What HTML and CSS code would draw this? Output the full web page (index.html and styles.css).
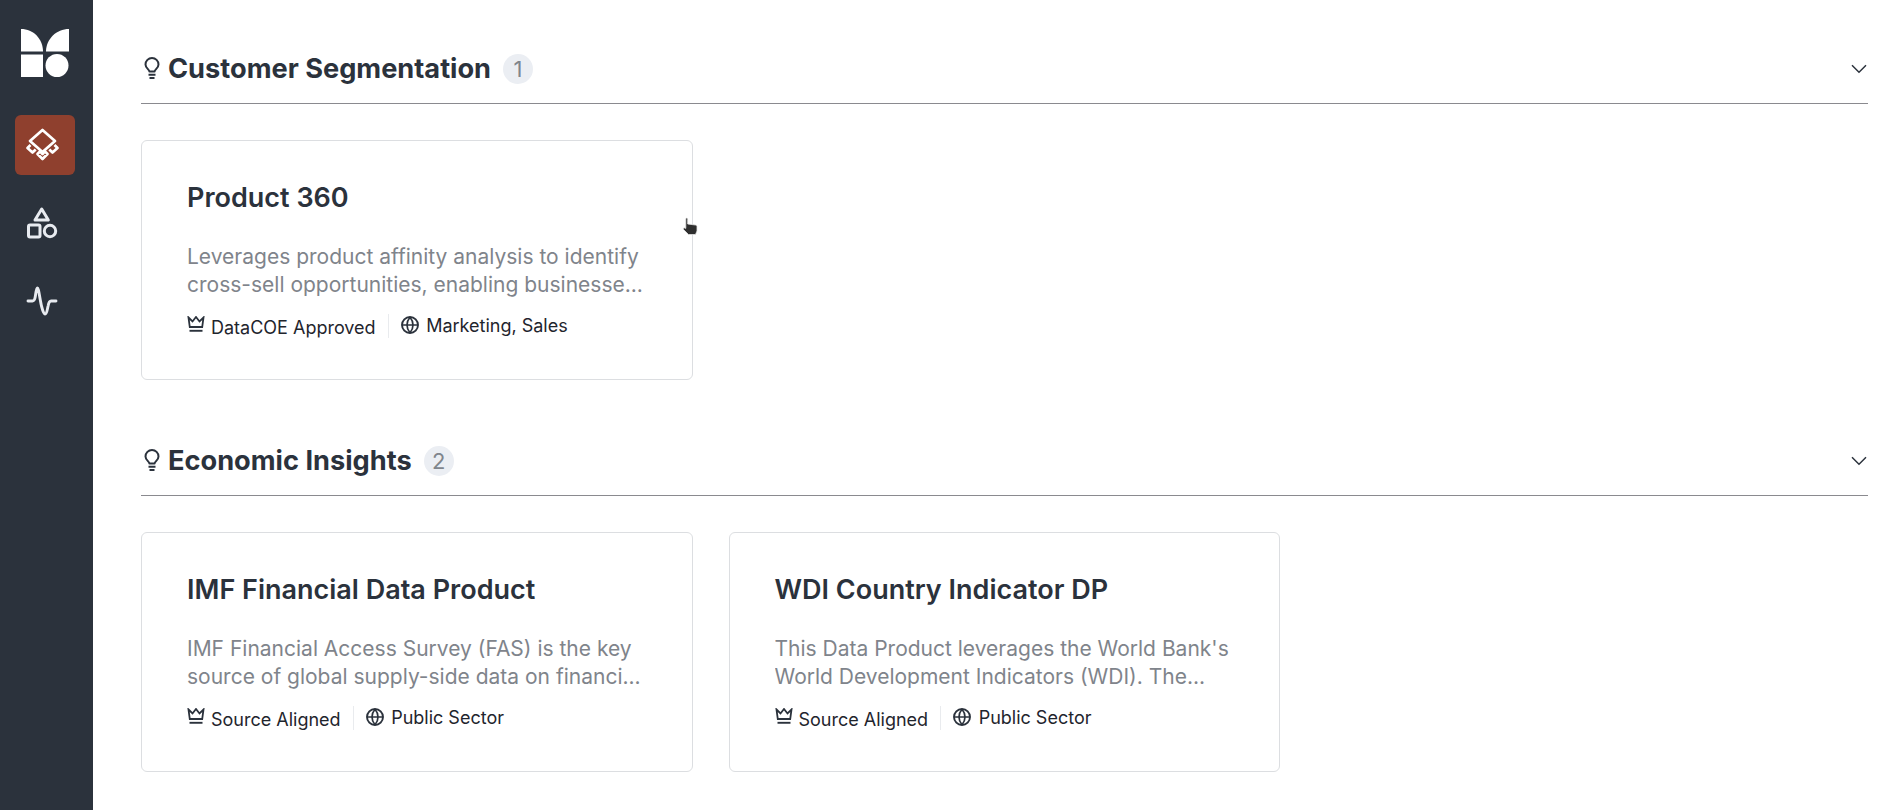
FILE: index.html
```html
<!DOCTYPE html>
<html lang="en">
<head>
<meta charset="utf-8">
<title>Data Products</title>
<link rel="stylesheet" href="styles.css">
</head>
<body>
<svg class="defs" width="0" height="0" aria-hidden="true">
  <symbol id="bulb" viewBox="0 0 16 24">
    <path d="M5.400 14.500c0-2-3.900-3.200-3.900-7a6.500 6.500 0 0 1 13 0c0 3.800-3.900 5-3.900 7z" fill="none" stroke="currentColor" stroke-width="2" stroke-linejoin="round"/>
    <path d="M4.500 17.700h7M5.500 21h5" fill="none" stroke="currentColor" stroke-width="2.100"/>
  </symbol>
  <symbol id="chev" viewBox="0 0 16 10">
    <path d="M1 1.200l7 7 7-7" fill="none" stroke="currentColor" stroke-width="1.500"/>
  </symbol>
  <symbol id="crown" viewBox="0 0 18 18">
    <path d="M1.500 1.500l4 4L9 1l3.500 4.500 4-4-1.300 9.500H2.800z" fill="none" stroke="currentColor" stroke-width="1.800" stroke-linejoin="miter"/>
    <path d="M2.500 14.800h13" fill="none" stroke="currentColor" stroke-width="1.900"/>
  </symbol>
  <symbol id="globe" viewBox="0 0 18 18">
    <circle cx="9" cy="9" r="8" fill="none" stroke="currentColor" stroke-width="1.900"/>
    <path d="M1.500 9h15M9 1.200c-4 4.600-4 11 0 15.600M9 1.200c4 4.600 4 11 0 15.600" fill="none" stroke="currentColor" stroke-width="1.700"/>
  </symbol>
</svg>
<div class="app">
  <nav class="sidebar">
    <svg class="logo" viewBox="0 0 48 48" width="48" height="48" aria-label="Logo">
      <path d="M0 0c12.500 0 22 10 22 22.500H0z" fill="#fff"/>
      <path d="M48 0v22.500H25C25 10 35.500 0 48 0z" fill="#fff"/>
      <path d="M0 25.500h22V48H0z" fill="#fff"/>
      <circle cx="36" cy="36.500" r="11.500" fill="#fff"/>
    </svg>
    <a class="nav-item active" href="#">
      <svg viewBox="0 0 60 60" width="60" height="60" fill="none" stroke="#fff" stroke-width="2.700" stroke-linejoin="round">
        <path d="M27.500 15l12.500 11-12.500 11-12.500-11z"/>
        <path d="M15.500 30l-3 3 5 4.500 3.200-3M39.500 30l3 3-5 4.500-3.200-3M22.500 39l5 5 5-5-2.500-2.500-2.500 2.500-2.500-2.500z"/>
      </svg>
    </a>
    <a class="nav-item" href="#">
      <svg viewBox="0 0 60 60" width="60" height="60" fill="none" stroke="#e8ebf0" stroke-width="3" stroke-linejoin="round">
        <path d="M26.700 16l6.600 11h-13.300z"/>
        <rect x="13.500" y="32" width="11.500" height="12" rx="1.500"/>
        <circle cx="35" cy="38" r="5.700"/>
      </svg>
    </a>
    <a class="nav-item" href="#">
      <svg viewBox="0 0 60 60" width="60" height="60" fill="none" stroke="#e8ebf0" stroke-width="2.900" stroke-linecap="round" stroke-linejoin="round">
        <path d="M13 30h4.500c1.500 0 2-1 2.500-3 .7-3 1.200-10 2.300-10s1.700 5 3 12c1 6 3 14 4.800 14s2.200-5 3-8c.5-3 1.500-5 3-5H41"/>
      </svg>
    </a>
  </nav>
  <main class="content">
    <section class="group">
      <header class="group-head">
        <svg class="bulb"><use href="#bulb"/></svg>
        <h2 class="group-title">Customer Segmentation</h2>
        <span class="count">1</span>
        <svg class="chev"><use href="#chev"/></svg>
      </header>
      <div class="cards">
        <article class="card">
          <h3 class="card-title">Product 360</h3>
          <p class="card-desc">Leverages product affinity analysis to identify cross-sell opportunities, enabling businesse...</p>
          <div class="meta">
            <svg class="crown"><use href="#crown"/></svg>
            <span class="tag-low">DataCOE Approved</span>
            <span class="sep"></span>
            <svg class="globe"><use href="#globe"/></svg>
            <span class="tag">Marketing, Sales</span>
          </div>
          <svg class="cursor" viewBox="0 0 16 18" width="16" height="18" aria-hidden="true">
            <path d="M4.500 1c.8 0 1.200.6 1.200 1.300V7l7.800 1c.8.100 1.500.8 1.500 1.700V14l-1.500 3.500H6.500L1 12l1-1.300 1.800.7V2.300C3.800 1.600 4 1 4.500 1z" fill="#2f2f2f" stroke="#e6e6e6" stroke-width=".8"/>
          </svg>
        </article>
      </div>
    </section>
    <section class="group">
      <header class="group-head">
        <svg class="bulb"><use href="#bulb"/></svg>
        <h2 class="group-title">Economic Insights</h2>
        <span class="count">2</span>
        <svg class="chev"><use href="#chev"/></svg>
      </header>
      <div class="cards">
        <article class="card">
          <h3 class="card-title">IMF Financial Data Product</h3>
          <p class="card-desc">IMF Financial Access Survey (FAS) is the key source of global supply-side data on financi...</p>
          <div class="meta">
            <svg class="crown"><use href="#crown"/></svg>
            <span class="tag-low">Source Aligned</span>
            <span class="sep"></span>
            <svg class="globe"><use href="#globe"/></svg>
            <span class="tag">Public Sector</span>
          </div>
        </article>
        <article class="card">
          <h3 class="card-title">WDI Country Indicator DP</h3>
          <p class="card-desc">This Data Product leverages the World Bank's World Development Indicators (WDI). The...</p>
          <div class="meta">
            <svg class="crown"><use href="#crown"/></svg>
            <span class="tag-low">Source Aligned</span>
            <span class="sep"></span>
            <svg class="globe"><use href="#globe"/></svg>
            <span class="tag">Public Sector</span>
          </div>
        </article>
      </div>
    </section>
  </main>
</div>
</body>
</html>
```

FILE: styles.css
```css
* { box-sizing: border-box; }
html, body { margin: 0; height: 100%; overflow: hidden; background: #fff; }
body { font-family: Inter, "Noto Sans", sans-serif; color: #2b323c; }
.defs { position: absolute; }
.app { display: flex; height: 810px; }
.sidebar {
  width: 93px;
  flex: none;
  background: #2b323c;
  display: flex;
  flex-direction: column;
  align-items: center;
  padding: 29px 3px 0 0;
}
.logo { display: block; margin-bottom: 38px; }
.nav-item {
  width: 60px;
  height: 60px;
  border-radius: 6px;
  display: flex;
  align-items: center;
  justify-content: center;
  margin-bottom: 18px;
}
.nav-item.active { background: #8f402e; }
.content { flex: 1; padding: 48px 21px 0 48px; min-width: 0; }
.group { margin-bottom: 60px; }
.group-head {
  display: flex;
  align-items: center;
  height: 56px;
  padding-bottom: 13px;
  border-bottom: 1.5px solid #8a8a8f;
  margin-bottom: 36px;
}
.bulb { width: 16px; height: 24px; margin-left: 3px; margin-right: 8px; color: #2b323c; }
.group-title { margin: 0; font-size: 27.2px; font-weight: 700; line-height: 34px; color: #2b323c; }
.count {
  width: 30px;
  height: 30px;
  border-radius: 50%;
  background: #ebeef3;
  color: #7f858c;
  font-size: 22px;
  display: flex;
  align-items: center;
  justify-content: center;
  margin-left: 12px;
}
.chev { width: 16px; height: 10px; margin-left: auto; margin-right: 1px; color: #2b323c; }
.cards { display: flex; gap: 36px; }
.card {
  position: relative;
  width: 551.5px;
  height: 240px;
  border: 1px solid #dcdee1;
  border-radius: 6px;
  padding: 40px 36px 0 45px;
}
.card-title { margin: 0 0 28px; font-size: 27px; font-weight: 600; line-height: 34px; color: #2b323c; }
.card-desc {
  margin: 0 0 15px;
  font-size: 21px;
  line-height: 28px;
  color: #7f848b;
  display: -webkit-box;
  -webkit-line-clamp: 2;
  -webkit-box-orient: vertical;
  overflow: hidden;
}
.meta { display: flex; align-items: center; height: 24px; font-size: 18px; color: #1f252d; }
.crown { width: 18px; height: 18px; margin-right: 6px; position: relative; top: -1px; color: #2b323c; }
.tag-low { position: relative; top: 1px; }
.tag { position: relative; top: -1px; }
.sep { width: 1px; height: 24px; background: #e9ebee; margin: 0 12px; }
.globe { width: 18px; height: 18px; margin-right: 7.5px; position: relative; top: -1px; color: #2b323c; }
.cursor { position: absolute; left: 540px; top: 76px; }
```
